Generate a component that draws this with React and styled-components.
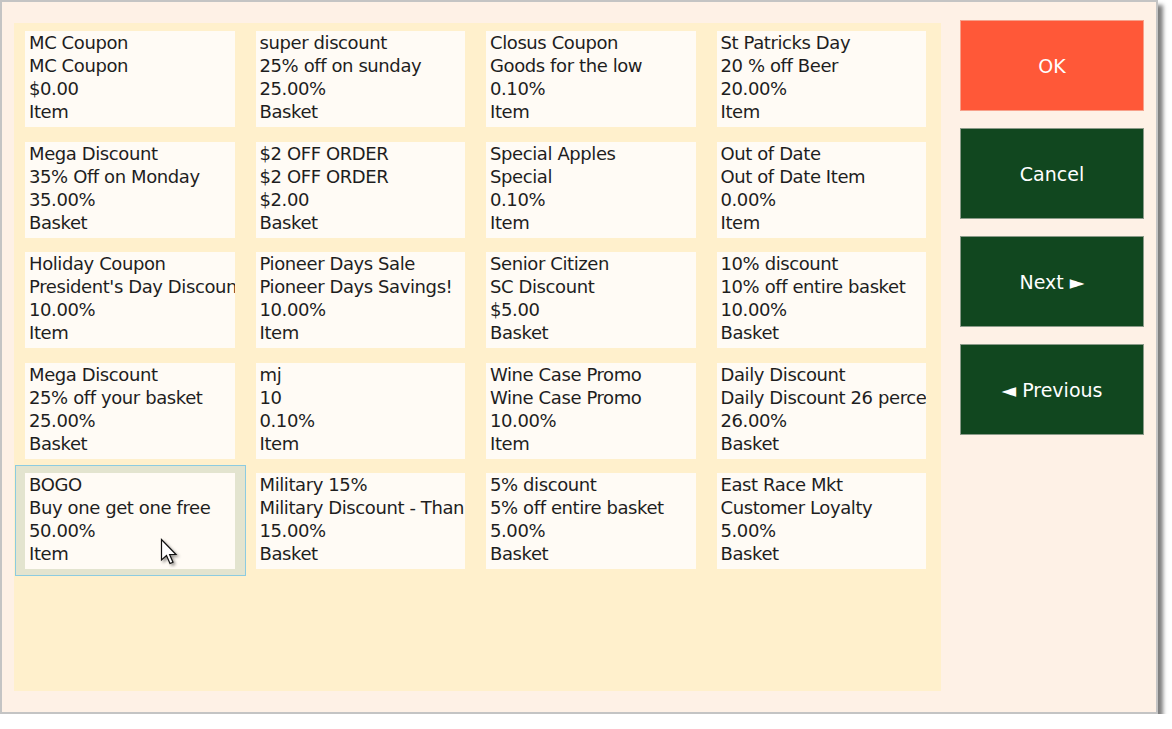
import React from "react";
import styled, { createGlobalStyle } from "styled-components";

const GlobalStyle = createGlobalStyle`
  body {
    margin: 0;
    background: #ffffff;
  }
`;

const Window = styled.div`
  box-sizing: border-box;
  width: 1158px;
  height: 714px;
  border: 2px solid #c4c4c4;
  background: #fef1e6;
  box-shadow: 5px 5px 4px rgba(0, 0, 0, 0.5);
  display: flex;
  align-items: flex-start;
  padding: 18px 0 0 12px;
`;

const Panel = styled.div`
  box-sizing: border-box;
  width: 927px;
  height: 668px;
  margin-top: 3px;
  padding-left: 1px;
  background: #fff0cc;
  display: grid;
  grid-template-columns: repeat(4, 230.5px);
  grid-auto-rows: 110.5px;
  align-content: start;
`;

const Slot = styled.div`
  position: relative;
  box-sizing: border-box;
  padding: 7px 10px 6px 9px;
  border: 1px solid ${({ selected }) => (selected ? "#8ccbe0" : "transparent")};
  background: ${({ selected }) => (selected ? "#e3e4cf" : "transparent")};
`;

const Card = styled.div`
  box-sizing: border-box;
  height: 96px;
  padding: 0 0 0 4px;
  background: #fffbf5;
  overflow: hidden;
  white-space: nowrap;
  font-family: "DejaVu Sans", Verdana, sans-serif;
  font-size: 18px;
  letter-spacing: -0.4px;
  line-height: 23px;
  color: #1e1e1e;
`;

const Line = styled.div`
  overflow: hidden;
`;

const Cursor = styled.svg`
  position: absolute;
  left: 144px;
  top: 72px;
  filter: drop-shadow(2px 2px 1.5px rgba(0, 0, 0, 0.4));
`;

const Side = styled.div`
  margin-left: 19px;
  width: 184px;
  display: flex;
  flex-direction: column;
  gap: 17px;
`;

const ActionButton = styled.button`
  box-sizing: border-box;
  height: 91px;
  width: 100%;
  border: 1px solid ${({ primary }) => (primary ? "#f7a08a" : "#8a9a88")};
  background: ${({ primary }) => (primary ? "#ff5838" : "#11471f")};
  color: #ffffff;
  font-family: "DejaVu Sans", Verdana, sans-serif;
  font-size: 19px;
  cursor: pointer;
`;

const coupons = [
  ["MC Coupon", "MC Coupon", "$0.00", "Item"],
  ["super discount", "25% off on sunday", "25.00%", "Basket"],
  ["Closus Coupon", "Goods for the low", "0.10%", "Item"],
  ["St Patricks Day", "20 % off Beer", "20.00%", "Item"],
  ["Mega Discount", "35% Off on Monday", "35.00%", "Basket"],
  ["$2 OFF ORDER", "$2 OFF ORDER", "$2.00", "Basket"],
  ["Special Apples", "Special", "0.10%", "Item"],
  ["Out of Date", "Out of Date Item", "0.00%", "Item"],
  ["Holiday Coupon", "President's Day Discount", "10.00%", "Item"],
  ["Pioneer Days Sale", "Pioneer Days Savings!", "10.00%", "Item"],
  ["Senior Citizen", "SC Discount", "$5.00", "Basket"],
  ["10% discount", "10% off entire basket", "10.00%", "Basket"],
  ["Mega Discount", "25% off your basket", "25.00%", "Basket"],
  ["mj", "10", "0.10%", "Item"],
  ["Wine Case Promo", "Wine Case Promo", "10.00%", "Item"],
  ["Daily Discount", "Daily Discount 26 percent", "26.00%", "Basket"],
  ["BOGO", "Buy one get one free", "50.00%", "Item"],
  ["Military 15%", "Military Discount - Thank you", "15.00%", "Basket"],
  ["5% discount", "5% off entire basket", "5.00%", "Basket"],
  ["East Race Mkt", "Customer Loyalty", "5.00%", "Basket"],
];

const SELECTED = 16;

function PointerCursor() {
  return (
    <Cursor width="20" height="30" viewBox="0 0 20 30">
      <path
        d="M1.5 1.5 L1.5 22 L6.5 17.5 L10 25.5 L13 24.2 L9.6 16.5 L16 16.5 Z"
        fill="#ffffff"
        stroke="#111111"
        strokeWidth="1.2"
        strokeLinejoin="miter"
      />
    </Cursor>
  );
}

export default function App() {
  return (
    <>
      <GlobalStyle />
      <Window>
        <Panel>
          {coupons.map((lines, i) => (
            <Slot key={i} selected={i === SELECTED}>
              <Card>
                {lines.map((text, j) => (
                  <Line key={j}>{text}</Line>
                ))}
              </Card>
              {i === SELECTED && <PointerCursor />}
            </Slot>
          ))}
        </Panel>
        <Side>
          <ActionButton primary>OK</ActionButton>
          <ActionButton>Cancel</ActionButton>
          <ActionButton>Next ►</ActionButton>
          <ActionButton>◄ Previous</ActionButton>
        </Side>
      </Window>
    </>
  );
}
